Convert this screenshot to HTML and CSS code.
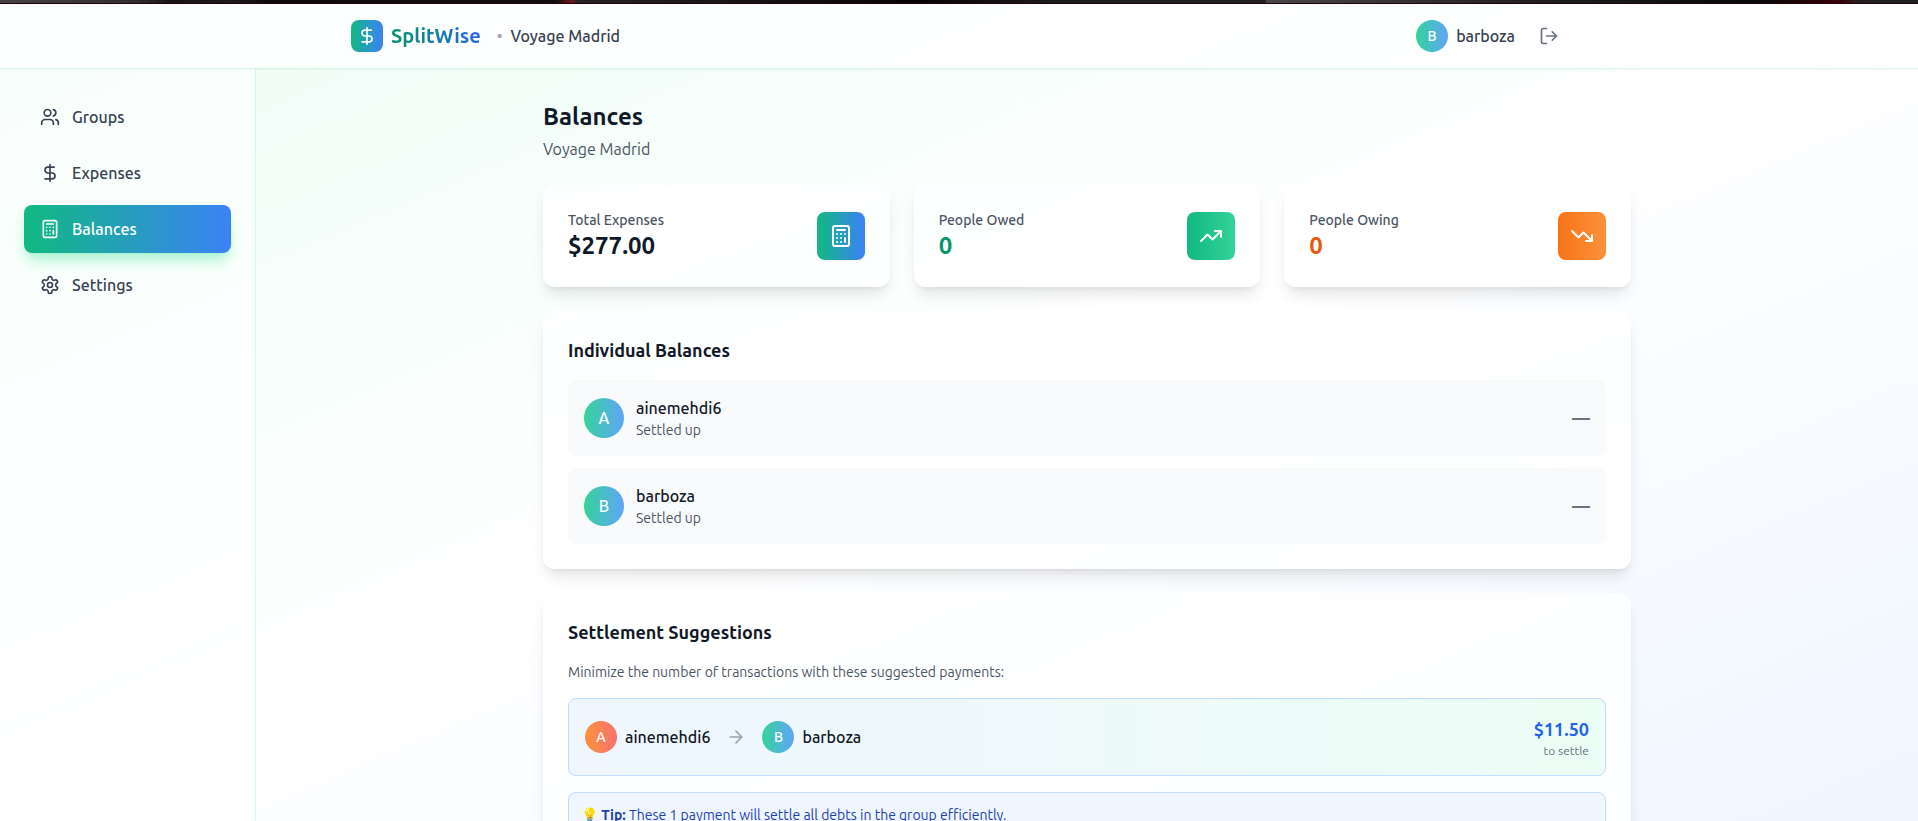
FILE: index.html
```html
<!DOCTYPE html>
<html lang="en">
<head>
<meta charset="utf-8">
<title>SplitWise - Balances</title>
<link rel="stylesheet" href="styles.css">
</head>
<body>
<svg class="sprite" aria-hidden="true">
  <symbol id="dollar" viewBox="0 0 24 24"><path d="M12 2v20M17 5H9.500a3.500 3.500 0 0 0 0 7h5a3.500 3.500 0 0 1 0 7H6"/></symbol>
  <symbol id="users" viewBox="0 0 24 24"><path d="M16 21v-2a4 4 0 0 0-4-4H6a4 4 0 0 0-4 4v2"/><circle cx="9" cy="7" r="4"/><path d="M22 21v-2a4 4 0 0 0-3-3.870M16 3.130a4 4 0 0 1 0 7.750"/></symbol>
  <symbol id="calculator" viewBox="0 0 24 24"><rect x="4" y="2" width="16" height="20" rx="2"/><path d="M8 6h8M16 14v4M16 10h.01M12 10h.01M8 10h.01M12 14h.01M8 14h.01M12 18h.01M8 18h.01"/></symbol>
  <symbol id="settings" viewBox="0 0 24 24"><path d="M12.220 2h-.44a2 2 0 0 0-2 2v.18a2 2 0 0 1-1 1.730l-.43.25a2 2 0 0 1-2 0l-.15-.08a2 2 0 0 0-2.730.73l-.22.38a2 2 0 0 0 .73 2.730l.15.1a2 2 0 0 1 1 1.720v.51a2 2 0 0 1-1 1.740l-.15.09a2 2 0 0 0-.73 2.730l.22.38a2 2 0 0 0 2.730.73l.15-.08a2 2 0 0 1 2 0l.43.25a2 2 0 0 1 1 1.730V20a2 2 0 0 0 2 2h.44a2 2 0 0 0 2-2v-.18a2 2 0 0 1 1-1.730l.43-.25a2 2 0 0 1 2 0l.15.08a2 2 0 0 0 2.730-.73l.22-.39a2 2 0 0 0-.73-2.730l-.15-.08a2 2 0 0 1-1-1.740v-.5a2 2 0 0 1 1-1.740l.15-.09a2 2 0 0 0 .73-2.730l-.22-.38a2 2 0 0 0-2.730-.73l-.15.08a2 2 0 0 1-2 0l-.43-.25a2 2 0 0 1-1-1.730V4a2 2 0 0 0-2-2z"/><circle cx="12" cy="12" r="3"/></symbol>
  <symbol id="logout" viewBox="0 0 24 24"><path d="M9 21H5a2 2 0 0 1-2-2V5a2 2 0 0 1 2-2h4M16 17l5-5-5-5M21 12H9"/></symbol>
  <symbol id="trend-up" viewBox="0 0 24 24"><path d="M22 7l-8.500 8.500-5-5L2 17M16 7h6v6"/></symbol>
  <symbol id="trend-down" viewBox="0 0 24 24"><path d="M22 17l-8.500-8.500-5 5L2 7M16 17h6v-6"/></symbol>
  <symbol id="arrow" viewBox="0 0 24 24"><path d="M5 12h14M12 5l7 7-7 7"/></symbol>
</svg>
<div class="window-edge"></div>
<div class="app">
  <header class="topbar">
    <div class="topbar-inner">
      <div class="brand">
        <span class="logo"><svg class="icon"><use href="#dollar"/></svg></span>
        <span class="brand-name">SplitWise</span>
        <span class="dot">•</span>
        <span class="group-name">Voyage Madrid</span>
      </div>
      <div class="account">
        <div class="person">
          <span class="avatar small">B</span>
          <span class="user-name">barboza</span>
        </div>
        <button class="logout" type="button" aria-label="Log out"><svg class="icon"><use href="#logout"/></svg></button>
      </div>
    </div>
  </header>
  <div class="body">
    <nav class="sidebar">
      <a class="nav-item" href="#groups"><svg class="icon"><use href="#users"/></svg>Groups</a>
      <a class="nav-item" href="#expenses"><svg class="icon"><use href="#dollar"/></svg>Expenses</a>
      <a class="nav-item active" href="#balances" aria-current="page"><svg class="icon"><use href="#calculator"/></svg>Balances</a>
      <a class="nav-item" href="#settings"><svg class="icon"><use href="#settings"/></svg>Settings</a>
    </nav>
    <main class="main">
      <div class="content">
        <div class="page-head">
          <h1>Balances</h1>
          <p>Voyage Madrid</p>
        </div>
        <div class="stats">
          <section class="card stat">
            <div><p class="stat-label">Total Expenses</p><p class="stat-value">$277.00</p></div>
            <span class="tile brand-tile"><svg class="icon large"><use href="#calculator"/></svg></span>
          </section>
          <section class="card stat">
            <div><p class="stat-label">People Owed</p><p class="stat-value owed">0</p></div>
            <span class="tile green-tile"><svg class="icon large"><use href="#trend-up"/></svg></span>
          </section>
          <section class="card stat">
            <div><p class="stat-label">People Owing</p><p class="stat-value owing">0</p></div>
            <span class="tile orange-tile"><svg class="icon large"><use href="#trend-down"/></svg></span>
          </section>
        </div>
        <section class="card">
          <h2>Individual Balances</h2>
          <div class="rows">
            <div class="row">
              <span class="avatar">A</span>
              <div class="row-text"><p class="name">ainemehdi6</p><p class="note">Settled up</p></div>
              <span class="dash">—</span>
            </div>
            <div class="row">
              <span class="avatar">B</span>
              <div class="row-text"><p class="name">barboza</p><p class="note">Settled up</p></div>
              <span class="dash">—</span>
            </div>
          </div>
        </section>
        <section class="card settle">
          <h2>Settlement Suggestions</h2>
          <p class="note">Minimize the number of transactions with these suggested payments:</p>
          <div class="payment">
            <div class="transfer">
              <div class="person"><span class="avatar small payer">A</span><span class="name">ainemehdi6</span></div>
              <svg class="icon arrow"><use href="#arrow"/></svg>
              <div class="person"><span class="avatar small">B</span><span class="name">barboza</span></div>
            </div>
            <div class="amount"><p class="amount-value">$11.50</p><p class="amount-note">to settle</p></div>
          </div>
          <p class="tip">💡 <strong>Tip:</strong> These 1 payment will settle all debts in the group efficiently.</p>
        </section>
      </div>
    </main>
  </div>
</div>
</body>
</html>
```
FILE: styles.css
```css
*, *::before, *::after { box-sizing: border-box; }
h1, h2, p { margin: 0; }

body {
  margin: 0;
  height: 100vh;
  display: flex;
  flex-direction: column;
  overflow: hidden;
  font-family: Ubuntu, "Noto Sans", sans-serif;
  font-size: 16px;
  font-weight: 400;
  line-height: 24px;
  color: #111827;
}

.sprite { position: absolute; width: 0; height: 0; }
.icon {
  width: 20px;
  height: 20px;
  flex: none;
  fill: none;
  stroke: currentColor;
  stroke-width: 2;
  stroke-linecap: round;
  stroke-linejoin: round;
}
.icon.large { width: 24px; height: 24px; }

.window-edge {
  flex: none;
  height: 4px;
  background: linear-gradient(to right, #444444, #303030 7%, #151515 9%, #1c1c1c 12%, #0c0c0c 14%, #101010 29%, #7a1820 30%, #242424 30%, #050505 48%, #1c1c1c 55%, #222222 66%, #484848 66%, #202020 80%, #080808 92%, #3a0008 96%, #202020 97%);
  border-bottom: 1px solid #260006;
}

.app {
  flex: 1;
  min-height: 0;
  display: flex;
  flex-direction: column;
  background: linear-gradient(to bottom right, #ecfdf5, #ffffff, #eff6ff);
}

.topbar {
  flex: none;
  background: rgba(255, 255, 255, 0.8);
  border-bottom: 1px solid #d1fae5;
  box-shadow: 0 1px 2px rgba(0, 0, 0, 0.05);
}
.topbar-inner {
  max-width: 1280px;
  height: 64px;
  margin: 0 auto;
  padding: 0 32px;
  display: flex;
  align-items: center;
  justify-content: space-between;
}
.brand, .account, .person { display: flex; align-items: center; gap: 8px; }
.account { gap: 16px; }
.logo {
  width: 32px;
  height: 32px;
  display: grid;
  place-items: center;
  border-radius: 8px;
  color: #ffffff;
  background: linear-gradient(to right, #10b981, #3b82f6);
}
.brand-name {
  font-size: 20px;
  line-height: 28px;
  font-weight: 600;
  color: transparent;
  background: linear-gradient(to right, #059669, #2563eb);
  background-clip: text;
}
.dot { margin-left: 8px; color: #9ca3af; }
.group-name, .user-name { font-weight: 500; color: #374151; }
.logout {
  display: flex;
  padding: 8px;
  border: 0;
  border-radius: 8px;
  background: none;
  color: #6b7280;
}

.body { flex: 1; min-height: 0; display: flex; }
.sidebar {
  flex: none;
  width: 256px;
  padding: 24px;
  display: flex;
  flex-direction: column;
  gap: 8px;
  background: rgba(255, 255, 255, 0.6);
  border-right: 1px solid #d1fae5;
}
.nav-item {
  display: flex;
  align-items: center;
  gap: 12px;
  padding: 12px 16px;
  border-radius: 8px;
  color: #374151;
  font-weight: 500;
  text-decoration: none;
}
.nav-item.active {
  color: #ffffff;
  background: linear-gradient(to right, #10b981, #3b82f6);
  box-shadow: 0 10px 15px -3px #a7f3d0, 0 4px 6px -4px #a7f3d0;
}

.main { flex: 1; min-width: 0; overflow: hidden; }
.content {
  max-width: 1152px;
  margin: 0 auto;
  padding: 32px;
  display: flex;
  flex-direction: column;
  gap: 24px;
}
.page-head { display: flex; flex-direction: column; gap: 4px; color: #4b5563; }
h1 { font-size: 24px; line-height: 32px; font-weight: 600; color: #111827; }
h2 { margin-bottom: 16px; font-size: 18px; line-height: 28px; font-weight: 600; }

.card {
  padding: 24px;
  border: 1px solid rgba(255, 255, 255, 0.2);
  border-radius: 12px;
  background: rgba(255, 255, 255, 0.8);
  box-shadow: 0 10px 15px -3px rgba(0, 0, 0, 0.1), 0 4px 6px -4px rgba(0, 0, 0, 0.1);
}
.stats { display: grid; grid-template-columns: repeat(3, 1fr); gap: 24px; }
.stat { display: flex; align-items: center; justify-content: space-between; }
.stat-label { font-size: 14px; line-height: 20px; font-weight: 500; color: #4b5563; }
.stat-value { font-size: 24px; line-height: 32px; font-weight: 600; }
.owed { color: #059669; }
.owing { color: #ea580c; }
.tile {
  width: 48px;
  height: 48px;
  display: grid;
  place-items: center;
  border-radius: 8px;
  color: #ffffff;
}
.brand-tile { background: linear-gradient(to right, #10b981, #3b82f6); }
.green-tile { background: linear-gradient(to right, #10b981, #34d399); }
.orange-tile { background: linear-gradient(to right, #f97316, #fb923c); }

.rows { display: flex; flex-direction: column; gap: 12px; }
.row {
  display: flex;
  align-items: center;
  gap: 12px;
  padding: 16px;
  border-radius: 8px;
  background: #f9fafb;
}
.row-text { flex: 1; }
.avatar {
  width: 40px;
  height: 40px;
  display: grid;
  place-items: center;
  border-radius: 50%;
  color: #ffffff;
  font-weight: 500;
  background: linear-gradient(to right, #34d399, #60a5fa);
}
.avatar.small { width: 32px; height: 32px; font-size: 14px; }
.avatar.payer { background: linear-gradient(to right, #fb923c, #f87171); }
.name { font-weight: 500; }
.note { font-size: 14px; line-height: 20px; color: #4b5563; }
.dash { font-size: 18px; line-height: 28px; font-weight: 600; color: #6b7280; }

.payment {
  display: flex;
  align-items: center;
  justify-content: space-between;
  margin-top: 16px;
  padding: 16px;
  border: 1px solid #bfdbfe;
  border-radius: 8px;
  background: linear-gradient(to right, #eff6ff, #ecfdf5);
}
.transfer { display: flex; align-items: center; gap: 16px; }
.arrow { color: #9ca3af; }
.amount { text-align: right; }
.amount-value { font-size: 18px; line-height: 28px; font-weight: 600; color: #2563eb; }
.amount-note { font-size: 12px; line-height: 16px; color: #6b7280; }
.tip {
  margin-top: 16px;
  padding: 12px;
  border: 1px solid #bfdbfe;
  border-radius: 8px;
  background: #eff6ff;
  color: #1e40af;
  font-size: 14px;
  line-height: 20px;
}
.tip strong { font-weight: 600; }
```
